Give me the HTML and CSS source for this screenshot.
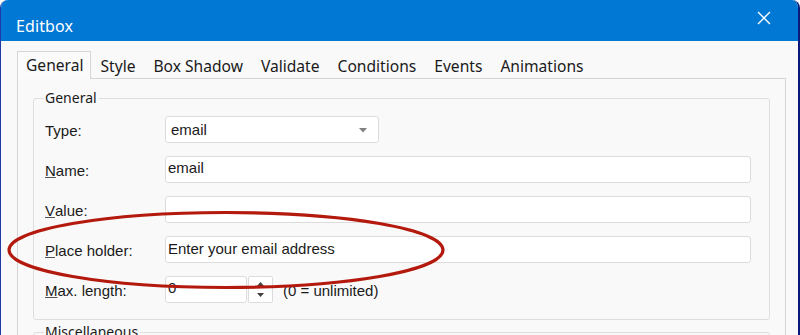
FILE: index.html
```html
<!DOCTYPE html>
<html>
<head>
<meta charset="utf-8">
<link rel="stylesheet" href="styles.css">
</head>
<body>
<div class="window">
  <div class="titlebar">
    <span class="title">Editbox</span>
    <svg class="close" width="14" height="14" viewBox="0 0 14 14"><path d="M1 1 L13 13 M13 1 L1 13" stroke="#fff" stroke-width="1.4" fill="none"/></svg>
  </div>
  <div class="body">
    <div class="tabs">
      <span class="tab active">General</span>
      <span class="tab">Style</span>
      <span class="tab">Box Shadow</span>
      <span class="tab">Validate</span>
      <span class="tab">Conditions</span>
      <span class="tab">Events</span>
      <span class="tab">Animations</span>
    </div>
    <div class="panel">
      <fieldset class="group">
        <legend>General</legend>
        <div class="form">
          <label>Type:</label>
          <div class="select"><span>email</span><svg width="8" height="5" viewBox="0 0 8 5"><path d="M0 0 H8 L4 4.5 Z" fill="#808080"/></svg></div>
          <label><u>N</u>ame:</label>
          <div class="input">email</div>
          <label><u>V</u>alue:</label>
          <div class="input"></div>
          <label><u>P</u>lace holder:</label>
          <div class="input mid">Enter your email address</div>
          <label><u>M</u>ax. length:</label>
          <div class="numrow">
            <div class="input num">0</div>
            <div class="spin">
              <svg width="8" height="6" viewBox="0 0 8 6"><path d="M0 5 H7 L3.5 1 Z" fill="#404040"/></svg>
              <svg width="8" height="6" viewBox="0 0 8 6"><path d="M0 1 H7 L3.5 5 Z" fill="#404040"/></svg>
            </div>
            <span class="hint">(0 = unlimited)</span>
          </div>
        </div>
      </fieldset>
      <fieldset class="group misc">
        <legend>Miscellaneous</legend>
      </fieldset>
    </div>
  </div>
  <svg class="mark" width="800" height="335" viewBox="0 0 800 335"><ellipse cx="226" cy="250" rx="217" ry="37.5" fill="none" stroke="#b3190c" stroke-width="3.2"/></svg>
</div>
</body>
</html>
```
FILE: styles.css
```css
html, body {
  margin: 0;
  padding: 0;
  background: #ffffff;
  overflow: hidden;
}
.window {
  position: relative;
  width: 800px;
  height: 335px;
  box-sizing: border-box;
  overflow: hidden;
  border-left: 1px solid #1e3aa8;
  border-right: 2px solid #0a1a7a;
  border-radius: 8px 8px 0 0;
  font-family: "Noto Sans", "Open Sans", sans-serif;
}
.titlebar {
  height: 41px;
  background: #0078d4;
  display: flex;
  align-items: center;
  justify-content: space-between;
  padding: 0 27px 0 15px;
  box-sizing: border-box;
}
.title {
  color: #ffffff;
  font-size: 16px;
  margin-top: 10px;
  letter-spacing: 0.1px;
}
.close {
  margin-top: -5px;
}
.body {
  background: #f9f9f9;
  height: 294px;
  padding: 11px 12px 0 16px;
  box-sizing: border-box;
}
.tabs {
  display: flex;
  align-items: flex-end;
  height: 27px;
  font-size: 15.6px;
  color: #1a1a1a;
  position: relative;
  z-index: 1;
}
.tab {
  padding: 0 8px 0 8px;
  line-height: 26px;
  height: 26px;
  border: 1px solid transparent;
  border-bottom: none;
}
.tab.active {
  background: #fbfbfb;
  border-color: #d6d6d6;
  height: 27px;
  padding: 0 7px 0 8px;
}
.panel {
  border: 1px solid #d4d4d4;
  border-bottom: none;
  margin-top: -1px;
  height: 260px;
  padding: 11px 15px 0 15px;
  box-sizing: border-box;
}
.group {
  margin: 0;
  border: 1px solid #dedede;
  border-radius: 3px;
  padding: 10px 18px 16px 11px;
}
.group legend {
  font-size: 14px;
  color: #1a1a1a;
  padding: 0 2px 0 1px;
  margin-left: -1px;
  line-height: 16px;
}
.group.misc {
  margin-top: 4px;
  height: 20px;
}
.form {
  display: grid;
  grid-template-columns: 120px 1fr;
  grid-auto-rows: 27px;
  row-gap: 13px;
  font-family: "Liberation Sans", Arial, sans-serif;
  font-size: 15px;
  color: #1a1a1a;
}
.form label {
  display: flex;
  align-items: center;
  padding-top: 1px;
}
.form u {
  text-decoration-color: #555;
  text-underline-offset: 1px;
}
.input, .select {
  background: #ffffff;
  border: 1px solid #dcdcdc;
  border-radius: 3px;
  box-sizing: border-box;
  padding: 2px 0 0 2px;
  line-height: 18px;
}
.input.mid {
  padding-top: 3px;
}
.select {
  width: 214px;
  display: flex;
  align-items: center;
  justify-content: space-between;
  padding: 1px 11px 0 5px;
}
.numrow {
  display: flex;
  align-items: stretch;
}
.input.num {
  width: 82px;
}
.spin {
  width: 25px;
  margin-left: 1px;
  border: 1px solid #dcdcdc;
  border-radius: 2px;
  background: #ffffff;
  box-sizing: border-box;
  display: flex;
  flex-direction: column;
  align-items: center;
  justify-content: space-around;
  padding: 2px 0;
}
.hint {
  margin-left: 10px;
  display: flex;
  align-items: center;
  padding-top: 1px;
}
.mark {
  position: absolute;
  left: -1px;
  top: 0;
  pointer-events: none;
}
```
